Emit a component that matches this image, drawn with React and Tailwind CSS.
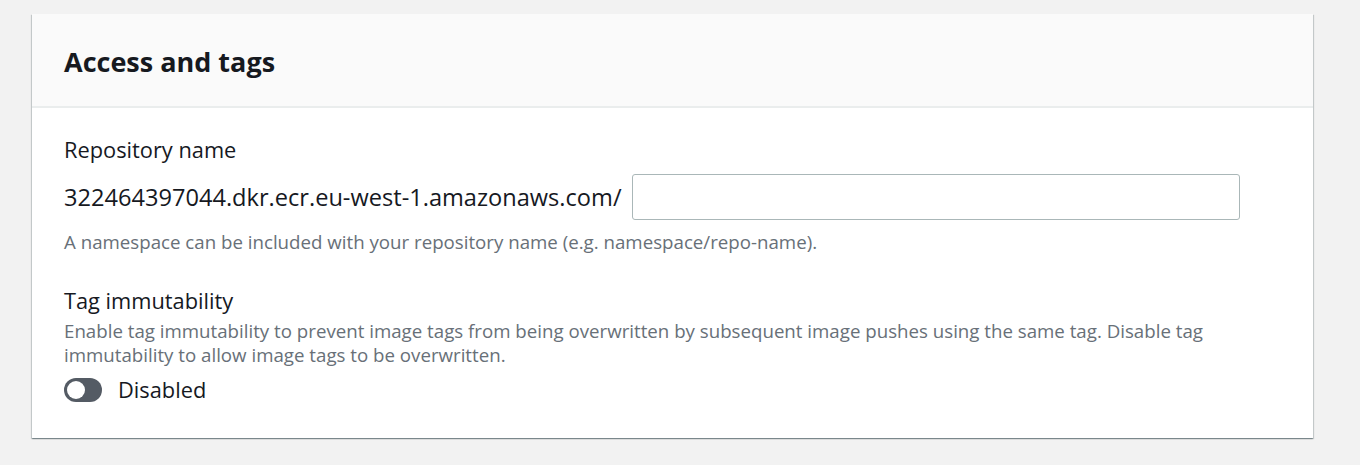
export default function App() {
  return (
    <div className="min-h-[465px] w-full bg-[#f2f2f2] pt-[14px] pl-[32px] pr-[47px]" style={{ fontFamily: '"Open Sans", "Noto Sans", sans-serif' }}>
      <div className="w-[1281px] bg-white shadow-[0_1px_1px_0_rgba(0,28,36,0.3),1px_1px_1px_0_rgba(0,28,36,0.15),-1px_1px_1px_0_rgba(0,28,36,0.15)]">
        <div className="h-[94px] bg-[#fafafa] border-b-2 border-[#eaeded] pl-[32px] flex items-center">
          <h2 className="text-[27px] font-bold text-[#16191f] leading-none mt-[3px]">Access and tags</h2>
        </div>
        <div className="pl-[32px] pt-[28px] pb-[34px]">
          <div className="text-[21.8px] text-[#16191f] leading-[28px]">Repository name</div>
          <div className="mt-[10px] flex items-center gap-[10px]">
            <span className="text-[23.6px] text-[#16191f] leading-[32px]">322464397044.dkr.ecr.eu-west-1.amazonaws.com/</span>
            <input className="w-[608px] h-[46px] border border-[#aab7b8] rounded-[3px] bg-white outline-none" />
          </div>
          <div className="mt-[10px] text-[18.7px] text-[#687078] leading-[24px]">A namespace can be included with your repository name (e.g. namespace/repo-name).</div>
          <div className="mt-[33px] text-[21.8px] text-[#16191f] leading-[28px]">Tag immutability</div>
          <div className="mt-[4px] text-[18.7px] text-[#687078] leading-[24px] max-w-[1152px]">Enable tag immutability to prevent image tags from being overwritten by subsequent image pushes using the same tag. Disable tag immutability to allow image tags to be overwritten.</div>
          <div className="mt-[9px] flex items-center gap-[16px]">
            <div className="w-[38px] h-[24px] rounded-full bg-[#545b64] relative">
              <div className="absolute left-[3px] top-[3px] w-[18px] h-[18px] rounded-full bg-white"></div>
            </div>
            <span className="text-[21.8px] text-[#16191f] leading-[28px]">Disabled</span>
          </div>
        </div>
      </div>
    </div>
  );
}
